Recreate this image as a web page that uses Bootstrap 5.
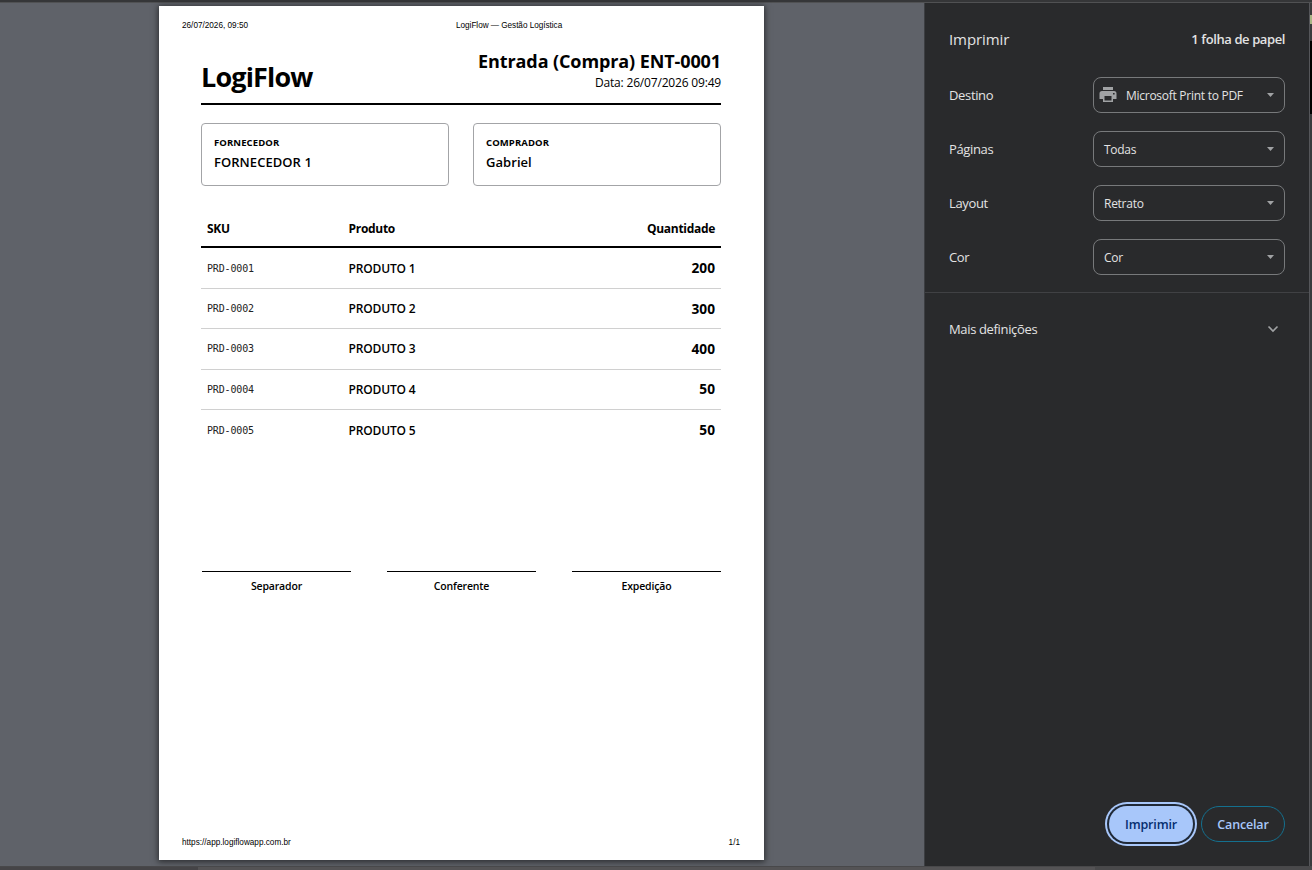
<!DOCTYPE html>
<html lang="pt">
<head>
    <meta charset="UTF-8" />
    <meta name="viewport" content="width=device-width, initial-scale=1" />
    <title>LogiFlow — Gestão Logística</title>
    <link href="https://cdn.jsdelivr.net/npm/bootstrap@5.3.0/dist/css/bootstrap.min.css" rel="stylesheet"/>
    <style>
        body { font-family: "Open Sans", "Noto Sans", sans-serif; font-size: 13px; background: #35363a; overflow: hidden; }
        .window-top { height: 3px; background: #353638; border-bottom: 1px solid #505153; }
        .window-bottom { height: 4px; background: #545355; border-top: 1px solid #48484a; }
        .window-bottom .strip-start { width: 198px; background: #454447; }
        .window-bottom .strip-end { width: 217px; background: #49494b; }
        .window-edge { width: 3px; background: #3a3b3d; border-left: 1px solid #55565a; }
        .edge-tab { height: 9px; margin-top: 12px; background: #a9b585; }
        .edge-dark { height: 73px; margin-top: 17px; background: #000; }

        .preview { width: 924px; background: #5f6269; padding: 3px 0 0 159px; }
        .sheet { width: 605px; height: 854px; background: #fff; color: #000; box-shadow: 0 1px 6px 1px rgba(0, 0, 0, .55); padding: 15px 0 12px; }
        .print-line { font: 8.2px/10px "Liberation Sans", sans-serif; padding: 0 24px 0 23px; height: 10px; }
        .sheet-title { margin-left: 208px; letter-spacing: -.03px; }
        .doc { padding: 0 43px 0 42px; }
        .doc-head { height: 74px; border-bottom: 2px solid #000; }
        .brand { font-size: 27px; line-height: 30px; letter-spacing: -.85px; margin: 31px 0 0; }
        .doc-title { font-size: 18px; line-height: 22px; margin-top: 19px; letter-spacing: -.1px; }
        .doc-date { font-size: 12px; line-height: 16px; margin-top: 3px; letter-spacing: -.18px; }
        .parties { margin-top: 18px; }
        .party { height: 63px; border: 1px solid #a3a4a7; border-radius: 4px; padding: 12px 12px 0; }
        .party-label { font-size: 9.5px; line-height: 14px; letter-spacing: .1px; }
        .party-name { font-size: 13px; line-height: 20px; margin-top: 2px; letter-spacing: .05px; }
        .items { width: 520px; table-layout: fixed; border-collapse: separate; border-spacing: 0; margin-top: 25px; }
        .items th, .items td { padding: 0 6px; vertical-align: middle; }
        .items th { height: 37px; font-size: 12px; letter-spacing: -.3px; padding-top: 1px; border-bottom: 2px solid #000; }
        .items td { height: 40.3px; font-size: 12px; letter-spacing: -.15px; padding-top: 1px; border-bottom: 1px solid #d0d0d0; }
        .items tbody tr:first-child td { height: 41px; }
        .items tr:last-child td { border-bottom: 0; }
        .items .sku { font: 10px "DejaVu Sans Mono", monospace; color: #222; padding-top: 0; }
        .items .qty { font-size: 13.7px; letter-spacing: 0; }
        .signs { gap: 36px; margin: 121px 0 0 1px; }
        .sign-line { border-top: 1px solid #000; font-size: 10.5px; line-height: 14px; letter-spacing: -.17px; padding-top: 7px; }

        .settings { background: #292a2c; color: #e3e3e3; border-left: 1px solid #3c3e42; letter-spacing: -.35px; }
        .settings-head { height: 74px; padding: 0 24px; }
        .settings-title { font-size: 15px; letter-spacing: -.1px; margin-top: -2px; }
        .sheet-count { letter-spacing: -.4px; }
        .setting { height: 36px; margin: 0 24px 18px; }
        .setting span { padding-top: 2px; }
        .setting-last { margin-bottom: 17px; }
        .pick { width: 192px; height: 36px; border: 1px solid #77797b; border-radius: 8px; padding: 0 10px; font-size: 12px; letter-spacing: -.27px; }
        .pick-printer { padding-left: 5px; }
        .pick-text { margin-left: 9px; }
        .more { height: 73px; padding: 0 30px 0 24px; border-top: 1px solid #404144; }
        .more span { padding-top: 2px; }
        .actions { padding: 0 24px 24px; gap: 8px; }
        .pill { height: 36px; border-radius: 18px; font-size: 12.5px; font-weight: 600; line-height: 36px; letter-spacing: -.15px; padding: 0; }
        .pill-print, .pill-print:hover { width: 84px; background: #a8c7fa; color: #062e6f; border: 0; line-height: 38px; box-shadow: 0 0 0 2px #1f2937, 0 0 0 4px #a8c7fa; }
        .pill-cancel, .pill-cancel:hover { width: 84px; border: 1px solid #14708f; color: #a8c7fa; }
    </style>
</head>
<body>
<div class="d-flex flex-column vh-100">
    <div class="window-top"></div>
    <div class="d-flex flex-grow-1">
        <main class="preview flex-shrink-0">
            <div class="sheet d-flex flex-column">
                <div class="print-line d-flex">
                    <span>26/07/2026, 09:50</span>
                    <span class="sheet-title">LogiFlow — Gestão Logística</span>
                </div>
                <div class="doc">
                    <div class="doc-head d-flex justify-content-between">
                        <div class="brand fw-bold">LogiFlow</div>
                        <div class="text-end">
                            <div class="doc-title fw-bold">Entrada (Compra) ENT-0001</div>
                            <div class="doc-date">Data: 26/07/2026 09:49</div>
                        </div>
                    </div>
                    <div class="parties row gx-4">
                        <div class="col-6">
                            <div class="party">
                                <div class="party-label fw-bold">FORNECEDOR</div>
                                <div class="party-name fw-semibold">FORNECEDOR 1</div>
                            </div>
                        </div>
                        <div class="col-6">
                            <div class="party">
                                <div class="party-label fw-bold">COMPRADOR</div>
                                <div class="party-name fw-semibold">Gabriel</div>
                            </div>
                        </div>
                    </div>
                    <table class="items">
                        <colgroup><col style="width: 141.5px"><col><col style="width: 120px"></colgroup>
                        <thead>
                            <tr><th>SKU</th><th>Produto</th><th class="text-end">Quantidade</th></tr>
                        </thead>
                        <tbody>
                            <tr><td class="sku">PRD-0001</td><td class="fw-semibold">PRODUTO 1</td><td class="qty fw-bold text-end">200</td></tr>
                            <tr><td class="sku">PRD-0002</td><td class="fw-semibold">PRODUTO 2</td><td class="qty fw-bold text-end">300</td></tr>
                            <tr><td class="sku">PRD-0003</td><td class="fw-semibold">PRODUTO 3</td><td class="qty fw-bold text-end">400</td></tr>
                            <tr><td class="sku">PRD-0004</td><td class="fw-semibold">PRODUTO 4</td><td class="qty fw-bold text-end">50</td></tr>
                            <tr><td class="sku">PRD-0005</td><td class="fw-semibold">PRODUTO 5</td><td class="qty fw-bold text-end">50</td></tr>
                        </tbody>
                    </table>
                    <div class="signs d-flex text-center fw-semibold">
                        <div class="sign-line flex-fill w-100">Separador</div>
                        <div class="sign-line flex-fill w-100">Conferente</div>
                        <div class="sign-line flex-fill w-100">Expedição</div>
                    </div>
                </div>
                <div class="print-line d-flex justify-content-between mt-auto">
                    <span>https://app.logiflowapp.com.br</span>
                    <span>1/1</span>
                </div>
            </div>
        </main>

        <aside class="settings d-flex flex-column flex-grow-1">
            <div class="settings-head d-flex align-items-center justify-content-between">
                <div class="settings-title">Imprimir</div>
                <div class="sheet-count fw-semibold">1 folha de papel</div>
            </div>
            <div class="setting d-flex align-items-center justify-content-between">
                <span>Destino</span>
                <div class="pick pick-printer d-flex align-items-center">
                    <svg width="18" height="18" viewBox="0 0 18 18" fill="#a0a2a4"><path d="M4 1h10v3H4zM3 5h12a2.500 2.500 0 0 1 2.500 2.500V13H14v3H4v-3H.5V7.500A2.500 2.500 0 0 1 3 5zm2.500 5v4.500h7V10zM14 7v1.600h1.600V7z" fill-rule="evenodd"/></svg>
                    <span class="pick-text">Microsoft Print to PDF</span>
                    <svg class="ms-auto" width="7" height="4" viewBox="0 0 7 4"><path d="M0 0h7L3.500 4z" fill="#a0a2a4"/></svg>
                </div>
            </div>
            <div class="setting d-flex align-items-center justify-content-between">
                <span>Páginas</span>
                <div class="pick d-flex align-items-center justify-content-between">
                    <span>Todas</span>
                    <svg width="7" height="4" viewBox="0 0 7 4"><path d="M0 0h7L3.500 4z" fill="#a0a2a4"/></svg>
                </div>
            </div>
            <div class="setting d-flex align-items-center justify-content-between">
                <span>Layout</span>
                <div class="pick d-flex align-items-center justify-content-between">
                    <span>Retrato</span>
                    <svg width="7" height="4" viewBox="0 0 7 4"><path d="M0 0h7L3.500 4z" fill="#a0a2a4"/></svg>
                </div>
            </div>
            <div class="setting setting-last d-flex align-items-center justify-content-between">
                <span>Cor</span>
                <div class="pick d-flex align-items-center justify-content-between">
                    <span>Cor</span>
                    <svg width="7" height="4" viewBox="0 0 7 4"><path d="M0 0h7L3.500 4z" fill="#a0a2a4"/></svg>
                </div>
            </div>
            <div class="more d-flex align-items-center justify-content-between">
                <span>Mais definições</span>
                <svg width="12" height="8" viewBox="0 0 12 8" fill="none" stroke="#a0a2a4" stroke-width="1.600"><path d="M1.500 1.500L6 6l4.500-4.500"/></svg>
            </div>
            <div class="actions d-flex justify-content-end mt-auto">
                <button type="button" class="btn pill pill-print">Imprimir</button>
                <button type="button" class="btn pill pill-cancel">Cancelar</button>
            </div>
        </aside>
        <div class="window-edge">
            <div class="edge-tab"></div>
            <div class="edge-dark"></div>
        </div>
    </div>
    <div class="window-bottom d-flex justify-content-between">
        <div class="strip-start"></div>
        <div class="strip-end"></div>
    </div>
</div>
<script src="https://cdn.jsdelivr.net/npm/bootstrap@5.3.0/dist/js/bootstrap.bundle.min.js"></script>
</body>
</html>
